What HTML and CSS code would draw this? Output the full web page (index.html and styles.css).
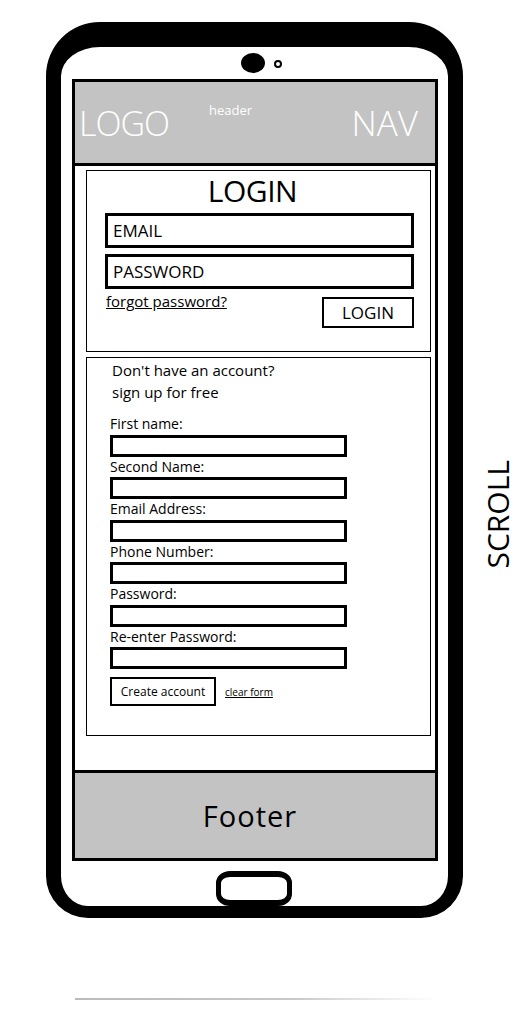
FILE: index.html
```html
<!DOCTYPE html>
<html>

<head>
  <title>Login wireframe</title>
  <link rel="stylesheet" href="styles.css">
</head>

<body>
  <div class="stage">
    <div class="device">
      <div class="phone">
        <div class="sensors">
          <span class="camera"></span>
          <span class="light"></span>
        </div>

        <div class="screen">
          <header class="site-header">
            <span class="logo">LOGO</span>
            <span class="header-label">header</span>
            <span class="nav">NAV</span>
          </header>

          <main class="content">
            <section class="login-box">
              <h1>LOGIN</h1>
              <input class="big-input" placeholder="EMAIL" />
              <input class="big-input" placeholder="PASSWORD" />
              <div class="login-row">
                <a href="#" class="forgot">forgot password?</a>
                <button class="login-btn">LOGIN</button>
              </div>
            </section>

            <section class="signup-box">
              <p class="intro">Don't have an account?</p>
              <p class="intro">sign up for free</p>

              <form class="signup-form">
                <label>First name:</label>
                <input class="small-input" />
                <label>Second Name:</label>
                <input class="small-input" />
                <label>Email Address:</label>
                <input class="small-input" />
                <label>Phone Number:</label>
                <input class="small-input" />
                <label>Password:</label>
                <input class="small-input" />
                <label>Re-enter Password:</label>
                <input class="small-input" />

                <div class="form-actions">
                  <button type="button" class="create-btn">Create account</button>
                  <a href="#" class="clear">clear form</a>
                </div>
              </form>
            </section>
          </main>

          <footer class="site-footer">Footer</footer>
        </div>

        <div class="home-button"></div>
      </div>
      <div class="reflection"></div>
    </div>

    <div class="scroll-label">SCROLL</div>
  </div>
</body>

</html>
```

FILE: styles.css
```css
body {
  margin: 0;
  padding: 22px 0 0 46px;
  background: #fff;
  color: #000;
  font-family: "Open Sans", "Noto Sans", sans-serif;
}

.stage {
  display: flex;
  align-items: flex-start;
}

.phone {
  width: 417px;
  height: 896px;
  box-sizing: border-box;
  border: solid #000;
  border-width: 25px 15px 12px;
  border-radius: 54px 54px 42px 42px;
  padding: 0 10px 0 11px;
  display: flex;
  flex-direction: column;
}

.sensors {
  height: 32px;
  display: flex;
  align-items: center;
  justify-content: center;
  gap: 9px;
  padding-left: 12px;
}

.camera {
  width: 24px;
  height: 20px;
  border-radius: 50%;
  background: #000;
}

.light {
  width: 4px;
  height: 4px;
  border: 2px solid #000;
  border-radius: 50%;
  margin-top: 2px;
}

.screen {
  width: 366px;
  height: 782px;
  box-sizing: border-box;
  border: 3px solid #000;
  display: flex;
  flex-direction: column;
}

.site-header {
  height: 81px;
  flex-shrink: 0;
  background: #c3c3c3;
  border-bottom: 3px solid #000;
  display: flex;
  align-items: center;
  padding: 0 17px 0 4px;
  color: #fff;
}

.logo,
.nav {
  font-size: 34px;
  font-weight: 300;
  letter-spacing: -1px;
}

.nav {
  margin-left: auto;
  font-size: 35px;
  letter-spacing: 0;
}

.header-label {
  align-self: flex-start;
  margin: 19px 0 0 40px;
  font-size: 13px;
}

.content {
  flex: 1;
  padding: 4px 4px 0 11px;
}

.login-box {
  height: 182px;
  box-sizing: border-box;
  border: 1px solid #000;
  padding: 0 16px 0 18px;
}

.login-box h1 {
  margin: 0 0 2px;
  font-size: 30px;
  font-weight: 400;
  line-height: 40px;
  text-align: center;
  padding-right: 14px;
  letter-spacing: -0.5px;
}

.big-input {
  display: block;
  width: 100%;
  height: 35px;
  box-sizing: border-box;
  border: 3px solid #000;
  padding: 0 5px;
  margin-bottom: 6px;
  font-family: inherit;
  font-size: 17px;
}

.big-input::placeholder {
  color: #000;
}

.login-row {
  display: flex;
  justify-content: space-between;
  align-items: flex-start;
}

.forgot {
  color: #000;
  font-size: 15px;
  margin: -4px 0 0 1px;
}

.login-btn {
  width: 92px;
  height: 31px;
  margin-top: 2px;
  border: 2px solid #000;
  background: #fff;
  font-family: inherit;
  font-size: 17px;
  padding: 0;
}

.signup-box {
  margin-top: 5px;
  height: 379px;
  box-sizing: border-box;
  border: 1px solid #000;
  padding: 1px 0 0 23px;
}

.intro {
  margin: 0 0 0 2px;
  font-size: 15px;
  line-height: 22px;
}

.signup-form {
  margin-top: 11px;
  display: flex;
  flex-direction: column;
  align-items: flex-start;
}

.signup-form label {
  font-size: 14px;
  line-height: 20.5px;
}

.small-input {
  width: 237px;
  height: 22px;
  box-sizing: border-box;
  border: 3px solid #000;
  margin: 0;
  padding: 0;
}

.form-actions {
  margin-top: 8px;
  display: flex;
  align-items: center;
  gap: 9px;
}

.create-btn {
  width: 106px;
  height: 29px;
  border: 2px solid #000;
  background: #fff;
  font-family: inherit;
  font-size: 12px;
  padding: 0;
}

.clear {
  color: #000;
  font-size: 10px;
}

.site-footer {
  height: 85px;
  flex-shrink: 0;
  background: #c3c3c3;
  border-top: 3px solid #000;
  display: flex;
  align-items: center;
  justify-content: center;
  padding-right: 10px;
  font-size: 29px;
  letter-spacing: 1px;
}

.home-button {
  align-self: center;
  width: 66px;
  height: 23px;
  margin: 10px 0 0 -3px;
  border: solid #000;
  border-width: 6px 5px;
  border-radius: 14px / 12px;
}

.reflection {
  height: 2px;
  width: 360px;
  margin: 80px 0 0 29px;
  background: linear-gradient(to right, #bbb, #c8c8c8 60%, rgba(200, 200, 200, 0));
}

.scroll-label {
  margin: 438px 0 0 18px;
  writing-mode: vertical-rl;
  transform: rotate(180deg);
  font-size: 30px;
  line-height: 34px;
}
```
